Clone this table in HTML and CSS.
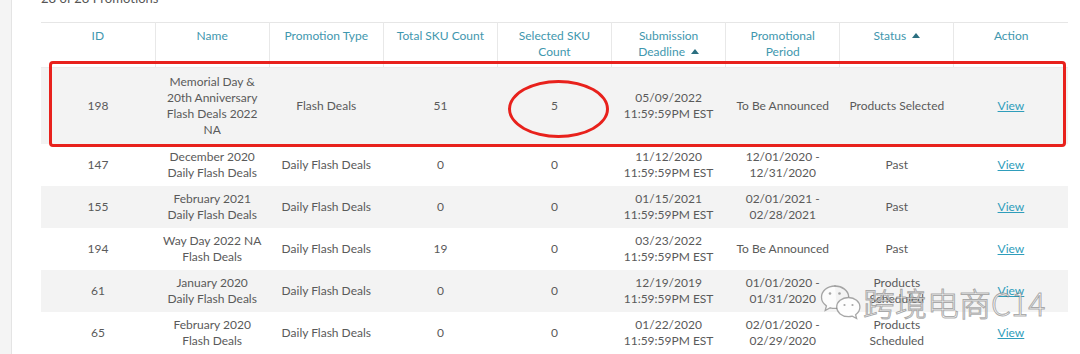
FILE: index.html
```html
<!DOCTYPE html>
<html>
<head>
<meta charset="utf-8">
<link rel="stylesheet" href="styles.css">
</head>
<body>
<div class="page">
  <aside class="sidebar"></aside>
  <main class="main">
    <div class="count">28 of 28 Promotions</div>
    <table class="promos">
      <thead>
        <tr>
          <th>ID</th>
          <th>Name</th>
          <th>Promotion Type</th>
          <th>Total SKU Count</th>
          <th>Selected SKU<br>Count</th>
          <th>Submission<br>Deadline <span class="sort"></span></th>
          <th>Promotional<br>Period</th>
          <th>Status <span class="sort"></span></th>
          <th>Action</th>
        </tr>
      </thead>
      <tbody>
        <tr class="shade tall">
          <td>198</td>
          <td>Memorial Day &amp;<br>20th Anniversary<br>Flash Deals 2022<br>NA</td>
          <td>Flash Deals</td>
          <td>51</td>
          <td>5</td>
          <td>05/09/2022<br>11:59:59PM EST</td>
          <td>To Be Announced</td>
          <td>Products Selected</td>
          <td><a href="#">View</a></td>
        </tr>
        <tr>
          <td>147</td>
          <td>December 2020<br>Daily Flash Deals</td>
          <td>Daily Flash Deals</td>
          <td>0</td>
          <td>0</td>
          <td>11/12/2020<br>11:59:59PM EST</td>
          <td>12/01/2020 -<br>12/31/2020</td>
          <td>Past</td>
          <td><a href="#">View</a></td>
        </tr>
        <tr class="shade">
          <td>155</td>
          <td>February 2021<br>Daily Flash Deals</td>
          <td>Daily Flash Deals</td>
          <td>0</td>
          <td>0</td>
          <td>01/15/2021<br>11:59:59PM EST</td>
          <td>02/01/2021 -<br>02/28/2021</td>
          <td>Past</td>
          <td><a href="#">View</a></td>
        </tr>
        <tr>
          <td>194</td>
          <td>Way Day 2022 NA<br>Flash Deals</td>
          <td>Daily Flash Deals</td>
          <td>19</td>
          <td>0</td>
          <td>03/23/2022<br>11:59:59PM EST</td>
          <td>To Be Announced</td>
          <td>Past</td>
          <td><a href="#">View</a></td>
        </tr>
        <tr class="shade">
          <td>61</td>
          <td>January 2020<br>Daily Flash Deals</td>
          <td>Daily Flash Deals</td>
          <td>0</td>
          <td>0</td>
          <td>12/19/2019<br>11:59:59PM EST</td>
          <td>01/01/2020 -<br>01/31/2020</td>
          <td>Products<br>Scheduled</td>
          <td><a href="#">View</a></td>
        </tr>
        <tr class="last">
          <td>65</td>
          <td>February 2020<br>Flash Deals</td>
          <td>Daily Flash Deals</td>
          <td>0</td>
          <td>0</td>
          <td>01/22/2020<br>11:59:59PM EST</td>
          <td>02/01/2020 -<br>02/29/2020</td>
          <td>Products<br>Scheduled</td>
          <td><a href="#">View</a></td>
        </tr>
      </tbody>
    </table>
  </main>

  <div class="mark-rect"></div>
  <div class="mark-ellipse"></div>

  <div class="watermark">
    <svg class="wechat" width="42" height="36" viewBox="0 0 42 36">
      <path d="M15 2C7.3 2 1.5 7.2 1.5 13.3c0 3.5 1.9 6.5 4.9 8.6L5.2 26.5l5.1-2.7c1.5.4 3.1.6 4.7.6.6 0 1.2 0 1.8-.1" fill="rgba(255,255,255,0.75)" stroke="rgba(110,110,110,0.6)" stroke-width="1.3" stroke-linecap="round"/>
      <path d="M15 2c7.4 0 13.3 4.8 13.7 10.6" fill="none" stroke="rgba(110,110,110,0.6)" stroke-width="1.3" stroke-linecap="round"/>
      <circle cx="10" cy="9.5" r="1.3" fill="rgba(110,110,110,0.6)"/>
      <circle cx="19.5" cy="9.5" r="1.3" fill="rgba(110,110,110,0.6)"/>
      <path d="M28.5 13.5c-6.6 0-11.8 4.3-11.8 9.6s5.2 9.6 11.8 9.6c1.3 0 2.6-.2 3.8-.5l4.3 2.3-1-3.8c2.6-1.8 4.3-4.5 4.3-7.6 0-5.3-5.2-9.6-11.4-9.6z" fill="rgba(255,255,255,0.8)" stroke="rgba(110,110,110,0.6)" stroke-width="1.3"/>
      <circle cx="24.5" cy="21" r="1.1" fill="rgba(110,110,110,0.6)"/>
      <circle cx="32.5" cy="21" r="1.1" fill="rgba(110,110,110,0.6)"/>
    </svg>
    <span class="wm-text">跨境电商C14</span>
  </div>
</div>
</body>
</html>
```

FILE: styles.css
```css
html, body {
  margin: 0;
  padding: 0;
  background: #ffffff;
}

.page {
  position: relative;
  display: flex;
  height: 354px;
  overflow: hidden;
  font-family: "Lato", "Liberation Sans", sans-serif;
  font-size: 12px;
  color: #5a5a5a;
}

.sidebar {
  width: 11px;
  flex: none;
  background: #f4f4f4;
  border-right: 1px solid #e4e4e4;
}

.main {
  flex: 1;
  padding-left: 29px;
  padding-right: 12px;
}

.count {
  margin-top: -10px;
  height: 16px;
  line-height: 16px;
  font-size: 13px;
  color: #555555;
  margin-bottom: 16px;
}

.promos {
  width: 1027px;
  table-layout: fixed;
  border-collapse: collapse;
  border-top: 1px solid #e6e6e6;
}

.promos th {
  font-weight: normal;
  color: #3f97ae;
  line-height: 16px;
  padding: 5px 4px 7px;
  text-align: center;
  vertical-align: top;
  border-left: 1px solid #e8e8e8;
  border-bottom: 1px solid #ececec;
}

.promos th:first-child {
  border-left: none;
}

.sort {
  display: inline-block;
  width: 0;
  height: 0;
  margin-left: 3px;
  vertical-align: 2px;
  border-left: 4px solid transparent;
  border-right: 4px solid transparent;
  border-bottom: 5px solid #2b6f80;
}

.promos td {
  line-height: 16px;
  padding: 5px 4px;
  text-align: center;
  vertical-align: middle;
}

.promos tr.tall td {
  padding: 6px 4px;
}

.promos tr.shade td {
  background: #f3f3f3;
}

.promos tr.last td {
  border-bottom: 1px solid #e8e8e8;
}

.promos a {
  color: #2f9dbb;
  text-decoration: underline;
}

.mark-rect {
  position: absolute;
  left: 49px;
  top: 61px;
  width: 1011px;
  height: 80px;
  border: 3px solid #e8211c;
  border-radius: 4px;
}

.mark-ellipse {
  position: absolute;
  left: 508px;
  top: 80px;
  width: 95px;
  height: 52px;
  border: 3px solid #e8211c;
  border-radius: 50%;
}

.watermark {
  position: absolute;
  left: 820px;
  top: 284px;
  display: flex;
  align-items: center;
  gap: 1px;
}

.wm-text {
  font-family: "Noto Sans CJK SC", sans-serif;
  font-weight: 300;
  font-size: 32px;
  line-height: 36px;
  color: rgba(255, 255, 255, 0.8);
  -webkit-text-stroke: 1px rgba(100, 100, 100, 0.55);
}
```
